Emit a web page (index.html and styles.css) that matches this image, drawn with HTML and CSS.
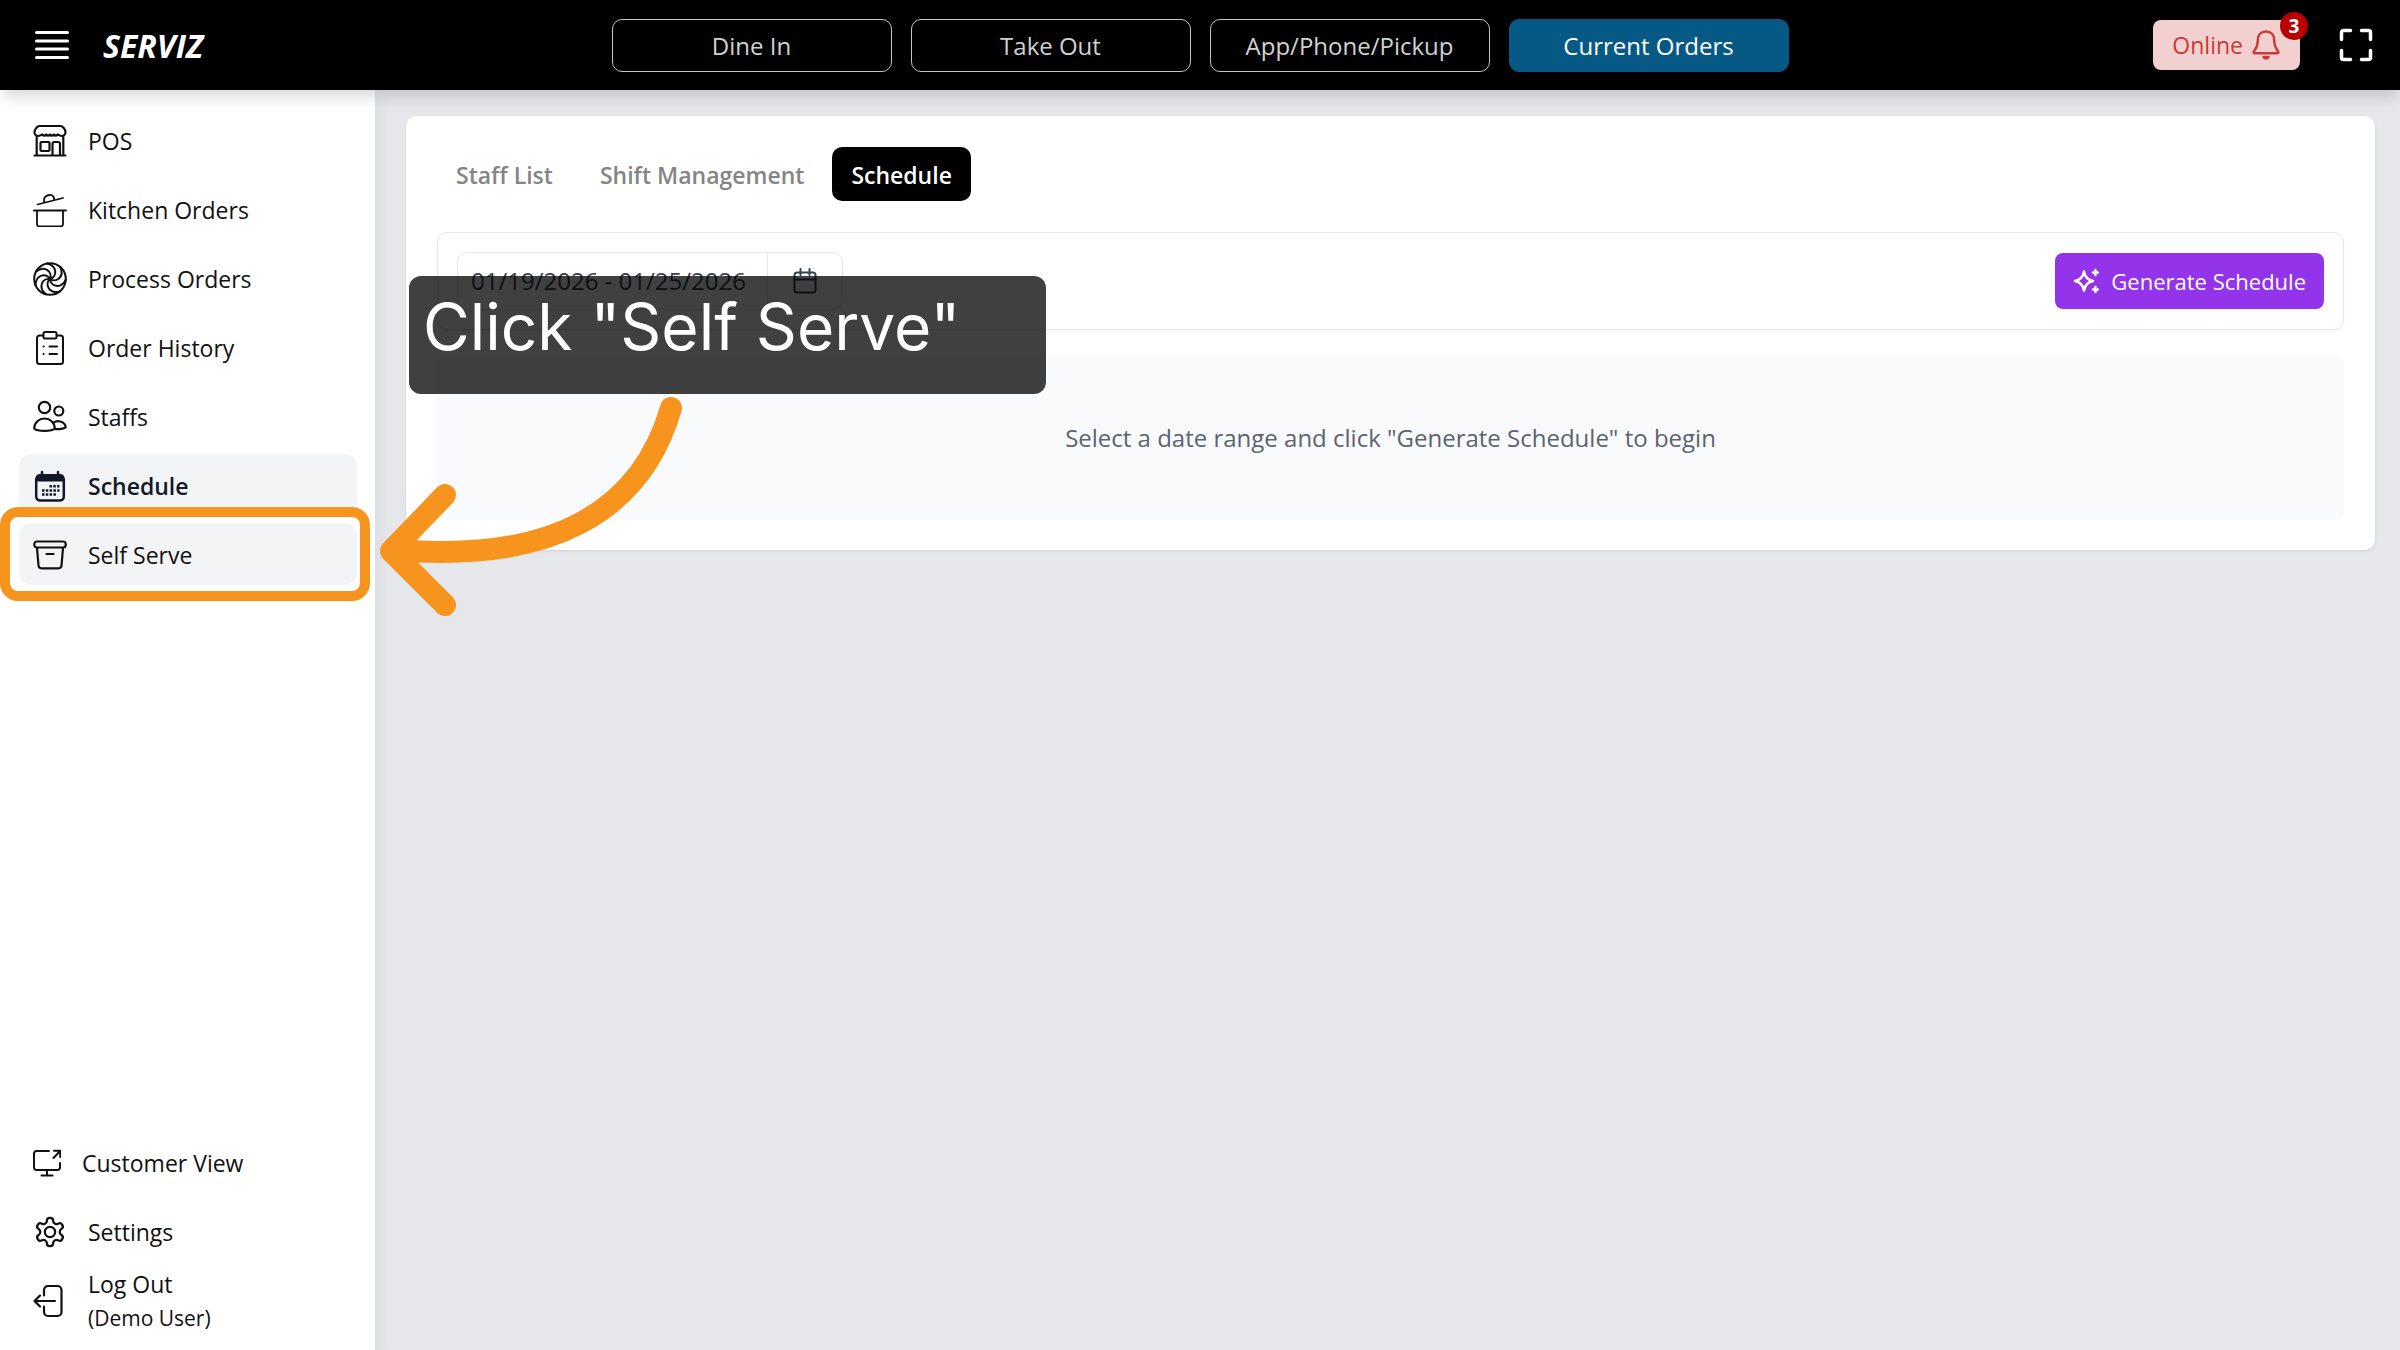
FILE: index.html
```html
<!DOCTYPE html>
<html lang="en">

<head>
  <meta charset="UTF-8">
  <meta name="viewport" content="width=device-width, initial-scale=1">
  <title>Serviz - Schedule</title>
  <link rel="stylesheet" href="styles.css">
</head>

<body>
  <header class="topbar">
    <div class="brand">
      <button class="icon-btn" aria-label="Toggle menu">
        <svg class="icon" viewBox="0 0 34 34" stroke-width="3">
          <path d="M1.500 4.500h31M1.500 13h31M1.500 21h31M1.500 29.500h31" />
        </svg>
      </button>
      <span class="logo">SERVIZ</span>
    </div>

    <nav class="order-types">
      <button class="order-btn">Dine In</button>
      <button class="order-btn">Take Out</button>
      <button class="order-btn">App/Phone/Pickup</button>
      <button class="order-btn active">Current Orders</button>
    </nav>

    <div class="status">
      <button class="online-btn">
        Online
        <svg class="icon bell" viewBox="0 0 28 32" stroke-width="2.500">
          <path d="M14 2.500c-5.200 0-8.200 3.500-8.200 8.500 0 6-1.600 8.500-3.800 11.200-.8 1-.4 2 .8 2h22.400c1.200 0 1.600-1 .8-2-2.200-2.700-3.800-5.200-3.800-11.200 0-5-3-8.500-8.200-8.500z" />
          <path d="M11.500 28c.8 2 4.200 2 5 0z" fill="currentColor" />
        </svg>
        <span class="badge">3</span>
      </button>
      <button class="icon-btn" aria-label="Fullscreen">
        <svg class="icon" viewBox="0 0 34 34" stroke-width="3.500">
          <path d="M2.500 11.500V4.500a2 2 0 0 1 2-2h7M22.500 2.500h7a2 2 0 0 1 2 2v7M31.500 22.500v7a2 2 0 0 1-2 2h-7M11.500 31.500h-7a2 2 0 0 1-2-2v-7" />
        </svg>
      </button>
    </div>
  </header>

  <div class="layout">
    <aside class="sidebar">
      <nav class="menu">
        <a class="menu-item" href="#">
          <svg class="icon" viewBox="0 0 34 34" stroke-width="2.200">
            <path d="M6.500 2h21c2 0 5 3 5 6.500 0 2-1.800 3.500-4 3.500-1.500 0-2.500-.7-3.800-1.500-1.200 1.500-2.600 1.500-3.900 0-1.200 1.500-2.600 1.500-3.800 0-1.200 1.500-2.600 1.500-3.800 0-1.300 1.500-2.700 1.500-3.900 0C8 11.300 7 12 5.500 12c-2.200 0-4-1.500-4-3.500C1.500 5 4.500 2 6.500 2z" />
            <path d="M3.700 12.500V31M30.300 12.500V31M1.500 31.500h31M19.500 31V20a2 2 0 0 1 2-2h3.500a2 2 0 0 1 2 2v11" />
            <rect x="7.500" y="18" width="9" height="9" rx="1" />
          </svg>
          POS
        </a>
        <a class="menu-item" href="#">
          <svg class="icon" viewBox="0 0 34 34" stroke-width="1.800">
            <path d="M1 17.500h32M4 17.500V31a2.500 2.500 0 0 0 2.500 2.500h21A2.500 2.500 0 0 0 30 31V17.500M4.500 11.500 30 5M11.500 9.500c-1.500-4 .5-7 4.500-7.500 4-.5 5.500 2.500 5 5" />
          </svg>
          Kitchen Orders
        </a>
        <a class="menu-item" href="#">
          <svg class="icon" viewBox="0 0 34 34" stroke-width="2">
            <circle cx="17" cy="17" r="15.800" />
            <path id="blade" d="M17 17C24 15 25 4 14 1.500" />
            <use href="#blade" transform="rotate(51 17 17)" />
            <use href="#blade" transform="rotate(103 17 17)" />
            <use href="#blade" transform="rotate(154 17 17)" />
            <use href="#blade" transform="rotate(206 17 17)" />
            <use href="#blade" transform="rotate(257 17 17)" />
            <use href="#blade" transform="rotate(309 17 17)" />
          </svg>
          Process Orders
        </a>
        <a class="menu-item" href="#">
          <svg class="icon" viewBox="0 0 34 34" stroke-width="2">
            <path d="M10 4.500H6.500A2.500 2.500 0 0 0 4 7v23.500A2.500 2.500 0 0 0 6.500 33h21a2.500 2.500 0 0 0 2.500-2.500V7a2.500 2.500 0 0 0-2.500-2.500H24" />
            <rect x="10.500" y="1" width="13" height="6.500" rx="1.500" />
            <path d="M16.500 15.500h7.500M16.500 23h7.500M10.500 15.500h.2M10.500 23h.2" />
          </svg>
          Order History
        </a>
        <a class="menu-item" href="#">
          <svg class="icon" viewBox="0 0 34 34" stroke-width="2.200">
            <circle cx="11.500" cy="7.500" r="5.700" />
            <circle cx="25.800" cy="11" r="4.500" />
            <path d="M1.200 28.500c0-6 5-10 10.300-10s10.300 4 10.300 10c-3 3.200-17.600 3.200-20.600 0zM20 23.500c3.500-4.500 12-2 12.700 3.700-1.700 1.800-7 2.300-10.700 1.600" />
          </svg>
          Staffs
        </a>
        <a class="menu-item current" href="#">
          <svg class="icon" viewBox="0 0 34 34" stroke-width="2.500">
            <rect x="3.200" y="6.500" width="27.600" height="25" rx="4" />
            <path d="M3 12.500V9a4 4 0 0 1 4-4h20a4 4 0 0 1 4 4v3.500z" fill="currentColor" stroke="none" />
            <path d="M9 3v4M25 3v4" />
            <path d="M16.500 17.300h10M9 21.500h17.500M9 25.500h14" stroke-dasharray="2.500 1.300" stroke-linecap="butt" />
          </svg>
          Schedule
        </a>
        <a class="menu-item target" href="#">
          <svg class="icon" viewBox="0 0 34 34" stroke-width="2.200">
            <rect x="1.300" y="3.500" width="31.400" height="6" rx="2.500" />
            <path d="M4 10l1.500 17.500a3 3 0 0 0 3 2.800h17a3 3 0 0 0 3-2.800L30 10M13.500 16h7" />
          </svg>
          Self Serve
        </a>
      </nav>

      <nav class="menu">
        <a class="menu-item compact" href="#">
          <svg class="icon" viewBox="0 0 28 28" stroke-width="2">
            <path d="M16 2H3.500A2.500 2.500 0 0 0 1 4.500v14A2.500 2.500 0 0 0 3.500 21h21a2.500 2.500 0 0 0 2.500-2.500V14M14 21v5M8.500 26.500h11M20.500 9 27 2M21 1.800h6.200V8" />
          </svg>
          Customer View
        </a>
        <a class="menu-item" href="#">
          <svg class="icon" viewBox="0 0 24 24" stroke-width="1.600">
            <path d="M12.220 2h-.44a2 2 0 0 0-2 2v.18a2 2 0 0 1-1 1.730l-.43.25a2 2 0 0 1-2 0l-.15-.08a2 2 0 0 0-2.730.73l-.22.38a2 2 0 0 0 .73 2.730l.15.1a2 2 0 0 1 1 1.720v.51a2 2 0 0 1-1 1.740l-.15.09a2 2 0 0 0-.73 2.730l.22.38a2 2 0 0 0 2.730.73l.15-.08a2 2 0 0 1 2 0l.43.25a2 2 0 0 1 1 1.730V20a2 2 0 0 0 2 2h.44a2 2 0 0 0 2-2v-.18a2 2 0 0 1 1-1.730l.43-.25a2 2 0 0 1 2 0l.15.08a2 2 0 0 0 2.730-.73l.22-.39a2 2 0 0 0-.73-2.730l-.15-.08a2 2 0 0 1-1-1.740v-.5a2 2 0 0 1 1-1.740l.15-.09a2 2 0 0 0 .73-2.730l-.22-.38a2 2 0 0 0-2.730-.73l-.15.08a2 2 0 0 1-2 0l-.43-.25a2 2 0 0 1-1-1.730V4a2 2 0 0 0-2-2z" />
            <circle cx="12" cy="12" r="3.600" />
          </svg>
          Settings
        </a>
        <a class="menu-item" href="#">
          <svg class="icon" viewBox="0 0 34 34" stroke-width="2.200">
            <path d="M11 11.500V6a4 4 0 0 1 4-4h9.500a4 4 0 0 1 4 4v22a4 4 0 0 1-4 4H15a4 4 0 0 1-4-4v-5.500M22 17H1.500M7 11.500 1.500 17 7 22.500" />
          </svg>
          <span>Log Out<small class="user">(Demo User)</small></span>
        </a>
      </nav>
    </aside>

    <main class="content">
      <section class="card">
        <div class="tabs">
          <button class="tab">Staff List</button>
          <button class="tab">Shift Management</button>
          <button class="tab active">Schedule</button>
        </div>

        <div class="toolbar">
          <div class="date-range">
            <input class="date-input" type="text" value="01/19/2026 - 01/25/2026" aria-label="Date range">
            <button class="date-btn" aria-label="Open calendar">
              <svg class="icon" viewBox="0 0 26 26" stroke-width="2">
                <rect x="2.500" y="4.500" width="21" height="20" rx="2.500" />
                <path d="M2.500 11.500h21M8.500 1v6M17.500 1v6" />
              </svg>
            </button>
          </div>
          <button class="generate-btn">
            <svg class="icon" viewBox="0 0 26 26" stroke-width="2.500">
              <path d="M11 3.500c1 5.500 3.500 8.500 9 9.500-5.500 1-8 4-9 9.500-1-5.500-3.500-8.500-9-9.500 5.500-1 8-4 9-9.500zM22.500 2v5M20 4.500h5M22.500 19v5M20 21.500h5" />
            </svg>
            Generate Schedule
          </button>
        </div>

        <div class="empty">Select a date range and click "Generate Schedule" to begin</div>
      </section>
    </main>
  </div>

  <!-- Guide overlay -->
  <div class="callout">Click "Self Serve"</div>
  <svg class="arrow" viewBox="0 0 310 230">
    <path d="M296 18C266 122 176 173 22 160M70 105 16 161 70 215" />
  </svg>
</body>

</html>
```
FILE: styles.css
```css
* {
  margin: 0;
  padding: 0;
  box-sizing: border-box;
}

body {
  display: flex;
  flex-direction: column;
  min-height: 100vh;
  font-family: 'Open Sans', sans-serif;
  font-size: 24px;
  line-height: 34px;
  color: #111;
  background: #e5e7eb;
  position: relative;
}

button,
input {
  font: inherit;
  color: inherit;
  background: none;
  border: none;
}

button {
  cursor: pointer;
}

a {
  color: inherit;
  text-decoration: none;
}

.icon {
  display: block;
  flex-shrink: 0;
  width: 34px;
  height: 34px;
  fill: none;
  stroke: currentColor;
  stroke-linecap: round;
  stroke-linejoin: round;
}

/* Top bar */
.topbar {
  display: grid;
  grid-template-columns: 1fr auto 1fr;
  align-items: center;
  height: 90px;
  padding: 0 27px;
  background: #000;
  color: #fff;
  box-shadow: 0 10px 15px -3px rgba(0, 0, 0, 0.15);
  position: relative;
  z-index: 2;
}

.brand,
.status {
  display: flex;
  align-items: center;
  gap: 34px;
}

.brand {
  padding-left: 8px;
}

.status {
  justify-content: flex-end;
  gap: 39px;
}

.logo {
  padding-top: 2px;
  font-size: 32px;
  font-weight: 700;
  font-style: italic;
}

.order-types {
  display: flex;
  gap: 19px;
}

.order-btn {
  width: 280px;
  height: 53px;
  padding-top: 2px;
  border: 1px solid #c4c4c4;
  border-radius: 10px;
  color: #d1d1d1;
}

.order-btn.active {
  background: #075985;
  border-color: #075985;
  color: #fff;
}

.online-btn {
  display: flex;
  align-items: center;
  gap: 9px;
  height: 50px;
  padding: 0 20px 0 19px;
  border-radius: 8px;
  background: #f3d0d0;
  color: #c93a3a;
  font-size: 23px;
  position: relative;
}

.bell {
  width: 28px;
  height: 32px;
}

.badge {
  position: absolute;
  top: -8px;
  right: -8px;
  width: 28px;
  height: 28px;
  border-radius: 50%;
  background: #b80000;
  color: #fff;
  font-size: 19px;
  font-weight: 700;
  line-height: 28px;
}

/* Sidebar */
.layout {
  display: flex;
  flex: 1;
}

.sidebar {
  display: flex;
  flex-direction: column;
  justify-content: space-between;
  width: 375px;
  padding: 19px 18px 19px 19px;
  background: #fff;
  box-shadow: 0 10px 20px rgba(0, 0, 0, 0.08);
  font-size: 23px;
}

.menu {
  display: flex;
  flex-direction: column;
  gap: 7px;
}

.menu-item {
  display: flex;
  align-items: center;
  gap: 21px;
  height: 62px;
  padding: 2px 14px 0;
  border-radius: 12px;
  position: relative;
}

.menu-item.current,
.menu-item.target {
  background: #f3f4f6;
}

.menu-item.current {
  font-weight: 600;
  color: #111827;
}

.menu-item.target::after {
  content: '';
  position: absolute;
  inset: -16px -13px -16px -19px;
  border: 10px solid #f7941e;
  border-radius: 18px;
}

.menu-item.compact .icon {
  width: 28px;
  height: 28px;
}

.user {
  display: block;
  font-size: 21px;
}

/* Content */
.content {
  flex: 1;
  padding: 26px 25px 26px 31px;
}

.card {
  padding: 31px 31px 30px;
  border-radius: 10px;
  background: #fff;
  box-shadow: 0 1px 3px rgba(0, 0, 0, 0.1);
}

.tabs {
  display: flex;
  gap: 9px;
}

.tab {
  height: 54px;
  padding: 2px 19px 0;
  border-radius: 10px;
  font-size: 23px;
  font-weight: 600;
  color: #858585;
}

.tab.active {
  background: #000;
  color: #fff;
}

.toolbar {
  display: flex;
  justify-content: space-between;
  align-items: center;
  margin: 31px 0 26px;
  padding: 19px;
  border: 1px solid #e5e7eb;
  border-radius: 10px;
  box-shadow: 0 1px 2px rgba(0, 0, 0, 0.05);
}

.date-range {
  display: flex;
  height: 58px;
  border: 1px solid #e5e7eb;
  border-radius: 10px;
}

.date-input {
  width: 310px;
  padding: 0 13px;
  border-right: 1px solid #e5e7eb;
  color: #374151;
}

.date-btn {
  padding: 0 24px;
  color: #374151;
}

.date-btn .icon,
.generate-btn .icon {
  width: 26px;
  height: 26px;
}

.generate-btn {
  display: flex;
  align-items: center;
  gap: 12px;
  height: 56px;
  padding: 0 18px;
  border-radius: 8px;
  background: #9333ea;
  color: #fff;
  font-size: 22px;
}

.empty {
  padding: 65px 20px;
  border-radius: 10px;
  background: #f9fafb;
  color: #5b6470;
  text-align: center;
}

/* Guide overlay */
.callout {
  position: absolute;
  z-index: 3;
  top: 276px;
  left: 409px;
  width: 637px;
  height: 118px;
  padding: 0 14px;
  border-radius: 12px;
  background: rgba(0, 0, 0, 0.75);
  color: #fff;
  font-family: Inter, sans-serif;
  font-size: 64px;
  line-height: 102px;
}

.arrow {
  position: absolute;
  z-index: 3;
  top: 390px;
  left: 375px;
  width: 310px;
  height: 230px;
  fill: none;
  stroke: #f7941e;
  stroke-width: 22px;
  stroke-linecap: round;
  stroke-linejoin: round;
}
```
